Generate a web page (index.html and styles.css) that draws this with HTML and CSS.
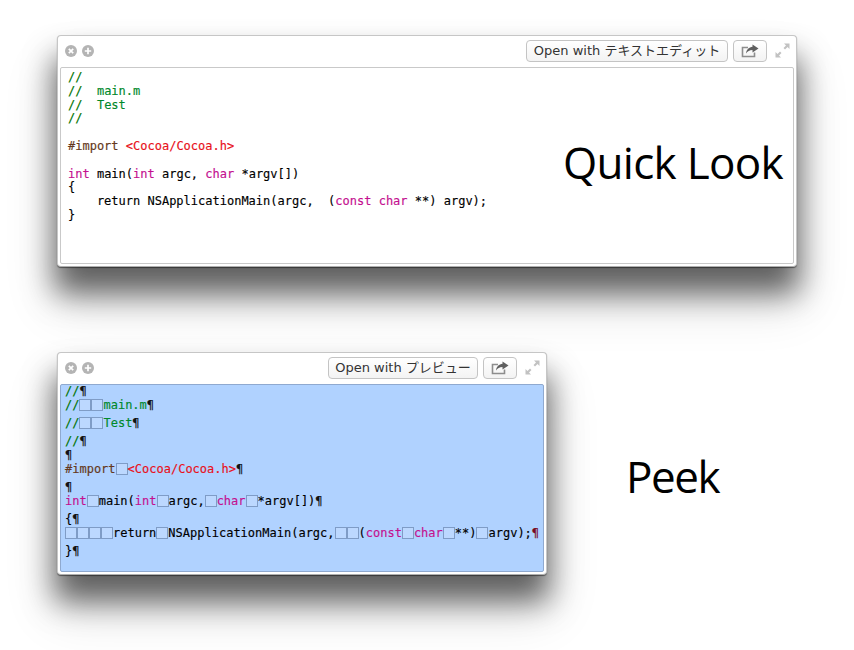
FILE: index.html
```html
<!DOCTYPE html>
<html lang="en">
<head>
<meta charset="utf-8">
<title>Quick Look and Peek</title>
<link rel="stylesheet" href="styles.css">
</head>
<body>
<main class="stage">
  <section class="row row-quick">
    <div class="window window-quick">
      <header class="titlebar">
        <span class="dot"><svg viewBox="0 0 12 12"><path d="M3.800 3.800l4.400 4.400M8.200 3.800l-4.400 4.400"/></svg></span>
        <span class="dot"><svg viewBox="0 0 12 12"><path d="M6 2.800v6.400M2.800 6h6.400"/></svg></span>
        <span class="spacer"></span>
        <button class="btn btn-open-quick">Open with テキストエディット</button>
        <button class="btn btn-share"><svg viewBox="0 0 20 14"><path class="tray" d="M8 3.500H2.500v9h12V8.500"/><path class="arrow" d="M12.500 0.500l6 4-6 4V6C9.500 6 7.500 7.300 6 9.500 6.500 5.500 9 3 12.500 2.700z"/></svg></button>
        <span class="expand"><svg viewBox="0 0 15 15"><path d="M9 0.500h5.500V6l-2-2L10 6.500 8.500 5 11 2.500zM6 14.500H0.500V9l2 2L5 8.500 6.500 10 4 12.500z"/></svg></span>
      </header>
      <div class="content content-quick">
<pre class="code"><span class="c">//</span>
<span class="c">//  <span class="cm">main.m</span></span>
<span class="c">//  <span class="cm">Test</span></span>
<span class="c">//</span>

<span class="p">#import</span> <span class="s">&lt;Cocoa/Cocoa.h&gt;</span>

<span class="k">int</span> main(<span class="k">int</span> argc, <span class="k">char</span> *argv[])
{
    return NSApplicationMain(argc,  (<span class="k">const</span> <span class="k">char</span> **) argv);
}</pre>
      </div>
      <p class="label label-quick">Quick Look</p>
    </div>
  </section>
  <section class="row row-peek">
    <div class="window window-peek">
      <header class="titlebar">
        <span class="dot"><svg viewBox="0 0 12 12"><path d="M3.800 3.800l4.400 4.400M8.200 3.800l-4.400 4.400"/></svg></span>
        <span class="dot"><svg viewBox="0 0 12 12"><path d="M6 2.800v6.400M2.800 6h6.400"/></svg></span>
        <span class="spacer"></span>
        <button class="btn btn-open-peek">Open with プレビュー</button>
        <button class="btn btn-share"><svg viewBox="0 0 20 14"><path class="tray" d="M8 3.500H2.500v9h12V8.500"/><path class="arrow" d="M12.500 0.500l6 4-6 4V6C9.500 6 7.500 7.300 6 9.500 6.500 5.500 9 3 12.500 2.700z"/></svg></button>
        <span class="expand"><svg viewBox="0 0 15 15"><path d="M9 0.500h5.500V6l-2-2L10 6.500 8.500 5 11 2.500zM6 14.500H0.500V9l2 2L5 8.500 6.500 10 4 12.500z"/></svg></span>
      </header>
      <div class="content content-peek">
        <div class="ln"><span class="c">//</span><span class="m">¶</span></div>
        <div class="ln"><span class="c">//<i class="b"></i><i class="b"></i><span class="cm">main.m</span></span><span class="m">¶</span></div>
        <div class="ln tall"><span class="c">//<i class="b"></i><i class="b"></i><span class="cm">Test</span></span><span class="m">¶</span></div>
        <div class="ln tall"><span class="c">//</span><span class="m">¶</span></div>
        <div class="ln"><span class="m">¶</span></div>
        <div class="ln"><span class="p">#import</span><i class="b"></i><span class="s">&lt;Cocoa/Cocoa.h&gt;</span><span class="m">¶</span></div>
        <div class="ln tall"><span class="m">¶</span></div>
        <div class="ln"><span class="k">int</span><i class="b"></i>main(<span class="k">int</span><i class="b"></i>argc,<i class="b"></i><span class="k">char</span><i class="b"></i>*argv[])<span class="m">¶</span></div>
        <div class="ln tall">{<span class="m">¶</span></div>
        <div class="ln"><i class="b"></i><i class="b"></i><i class="b"></i><i class="b"></i>return<i class="b"></i>NSApplicationMain(argc,<i class="b"></i><i class="b"></i>(<span class="k">const</span><i class="b"></i><span class="k">char</span><i class="b"></i>**)<i class="b"></i>argv);<span class="m red">¶</span></div>
        <div class="ln tall">}<span class="m">¶</span></div>
      </div>
    </div>
    <p class="label label-peek">Peek</p>
  </section>
</main>
</body>
</html>
```
FILE: styles.css
```css
* { box-sizing: border-box; }
html, body { margin: 0; height: 650px; overflow: hidden; background: #fff; }
.stage { padding: 35px 0 0 57px; }
.row-quick { margin-bottom: 85px; }
.row-peek { display: flex; align-items: flex-start; }
.window {
  position: relative;
  background: #fff;
  border: 1px solid #c6c6c6;
  border-bottom-color: #b0b0b0;
  border-radius: 4px;
  box-shadow: 0 1px 1px rgba(0,0,0,.45), 0 24px 30px 2px rgba(0,0,0,.58), 0 34px 50px 6px rgba(0,0,0,.12);
  display: flex;
  flex-direction: column;
}
.window-quick { width: 740px; height: 232px; }
.window-peek { width: 490px; height: 223px; }
.titlebar {
  height: 31px;
  flex: none;
  display: flex;
  align-items: center;
  padding: 0 6px 2px 7px;
}
.dot {
  width: 12px; height: 12px; border-radius: 50%;
  background: #b4b4b4;
  margin-right: 5px;
  flex: none;
  display: flex;
}
.dot svg { width: 12px; height: 12px; }
.dot path { stroke: #fff; stroke-width: 1.7; fill: none; }
.spacer { flex: 1; }
.btn {
  height: 22px;
  padding: 0;
  margin: 0;
  border: 1px solid #c4c4c4;
  border-radius: 4px;
  background: linear-gradient(#fff, #f3f3f3);
  color: #333;
  font: 13px/20px "DejaVu Sans", "Noto Sans CJK JP", sans-serif;
  display: flex;
  align-items: center;
  justify-content: center;
  white-space: nowrap;
  flex: none;
}
.btn-open-quick { width: 202px; margin-right: 5px; }
.btn-open-peek { width: 150px; margin-right: 5px; }
.btn-share { width: 34px; margin-right: 8px; }
.btn-share svg { width: 20px; height: 14px; }
.tray { fill: none; stroke: #8d8d8d; stroke-width: 1.6; }
.arrow { fill: #5f5f5f; }
.expand { width: 15px; height: 15px; flex: none; display: flex; }
.expand svg { width: 15px; height: 15px; }
.expand path { fill: #c2c2c2; }
.content {
  flex: 1;
  margin: 0 2px 2px;
  border: 1px solid #c9c9c9;
  border-radius: 2px;
  font: 12px/13.8px "DejaVu Sans Mono", monospace;
  -webkit-text-stroke: 0.15px currentColor;
  color: #000;
}
.content-quick { background: #fff; padding: 3px 0 0 7px; }
.content-peek { background: #b0d2ff; border-color: #8fa9cf; padding: 0 0 0 4px; }
.code { margin: 0; font: inherit; }
.c { color: #007400; }
.cm { color: #00892b; }
.p { color: #643820; }
.s { color: #e8101a; }
.k { color: #c4108f; }
.ln { height: 14px; white-space: pre; }
.tall { margin-top: 4px; }
.m { color: #111; }
.m.red { color: #7a0a20; }
.b {
  display: inline-block;
  width: 12px;
  height: 12px;
  vertical-align: -2px;
  border: 1px solid #7f9cc6;
  background: #bcd8ff;
}
.label {
  margin: 0;
  color: #000;
  font-family: "Open Sans", sans-serif;
  font-weight: 400;
  white-space: nowrap;
}
.label-quick {
  position: absolute;
  left: 505px;
  top: 96px;
  font-size: 44px;
  line-height: 60px;
  letter-spacing: -0.7px;
}
.label-peek {
  margin: 94px 0 0 79px;
  font-size: 44px;
  line-height: 60px;
  letter-spacing: -1.5px;
}
```
